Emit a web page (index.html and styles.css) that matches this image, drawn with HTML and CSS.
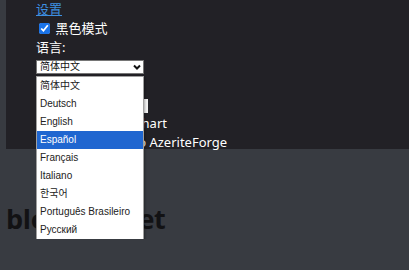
FILE: index.html
```html
<!DOCTYPE html>
<html lang="zh">

<head>
    <meta charset="UTF-8">
    <meta name="viewport" content="width=device-width, initial-scale=1.0">
    <title>bloodmallet</title>
    <link rel="stylesheet" href="styles.css">
</head>

<body>
    <!-- 设置面板 -->
    <div class="settings">
        <a href="#" class="settings_title">设置</a>
        <label class="row"><input type="checkbox" class="dark_check" checked> 黑色模式</label>
        <div class="row">语言:</div>
        <div class="lang_wrap">
            <select class="lang_select">
                <option>简体中文</option>
            </select>
            <!-- 下拉箭头 -->
            <svg class="lang_arrow" width="8" height="6" viewBox="0 0 8 6">
                <path d="M1 1.5 L4 4.5 L7 1.5" fill="none" stroke="#111" stroke-width="2" />
            </svg>
            <!-- 打开的下拉列表 -->
            <ul class="lang_list">
                <li>简体中文</li>
                <li>Deutsch</li>
                <li>English</li>
                <li class="active">Español</li>
                <li>Français</li>
                <li>Italiano</li>
                <li>한국어</li>
                <li>Português Brasileiro</li>
                <li>Русский</li>
            </ul>
        </div>
        <div class="row">图表:</div>
        <div class="row"><input type="text" class="chart_inp"></div>
        <div class="row">Display as a bar chart</div>
        <div class="row">Export the data to AzeriteForge</div>
    </div>

    <h1 class="logo">bloodmallet</h1>
</body>

</html>
```

FILE: styles.css
```css
* {
    margin: 0;
    padding: 0;
}

li {
    list-style: none;
}

body {
    background: #383b41;
    font-family: "Noto Sans", "Noto Sans CJK SC", sans-serif;
}

.settings {
    margin-left: 6px;
    height: 149px;
    padding-left: 30px;
    background: #222126;
    color: #ffffff;
    font-size: 13px;
    line-height: 19px;
}

.settings .settings_title {
    display: block;
    width: max-content;
    color: #3d8fe0;
    line-height: 19px;
}

.settings .row {
    display: block;
    height: 18.5px;
    line-height: 18.5px;
}

.settings .dark_check {
    width: 11px;
    height: 11px;
    margin: 0 2px 0 3px;
    vertical-align: -1px;
    accent-color: #1a73e8;
}

.lang_wrap {
    position: relative;
    height: 17px;
    padding-top: 4px;
}

.lang_select {
    display: block;
    width: 108px;
    height: 14px;
    padding: 0 0 0 3px;
    font-size: 10px;
    line-height: 12px;
    font-family: "Liberation Sans", "Noto Sans CJK SC", sans-serif;
    color: #111;
    background: #ffffff;
    border: 1px solid #767676;
    border-radius: 0;
    appearance: none;
    -webkit-appearance: none;
    outline: none;
}

.lang_arrow {
    position: absolute;
    left: 97px;
    top: 8px;
}

.lang_list {
    position: absolute;
    left: 0;
    top: 20px;
    width: 106px;
    height: 162px;
    background: #ffffff;
    border: 1px solid #a0a0a0;
    box-shadow: 1px 1px 2px rgba(0, 0, 0, 0.3);
    z-index: 10;
}

.lang_list li {
    height: 18px;
    line-height: 18px;
    padding-left: 3px;
    font-family: "Liberation Sans", "Noto Sans CJK KR", "Noto Sans CJK SC", sans-serif;
    font-size: 10px;
    color: #222;
}

.lang_list li.active {
    background: #1f66d0;
    color: #ffffff;
}

.chart_inp {
    width: 112px;
    height: 14px;
    border: none;
    background: #f2f2f2;
    vertical-align: middle;
}

.logo {
    margin: 50px 0 0 6px;
    font-family: "Open Sans", sans-serif;
    font-size: 27px;
    line-height: 40px;
    font-weight: 700;
    letter-spacing: -0.3px;
    color: #121214;
}
```
